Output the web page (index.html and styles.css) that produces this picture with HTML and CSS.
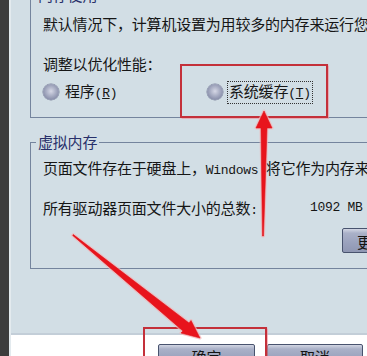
FILE: index.html
```
<!DOCTYPE html>
<html lang="zh-CN">
<head>
<meta charset="utf-8">
<title>性能选项</title>
<link rel="stylesheet" href="styles.css">
</head>
<body>
<div class="screen">
  <div class="strip"></div>
  <div class="window">
    <div class="panel">
      <fieldset class="group group-mem">
        <legend class="legend">内存使用</legend>
        <div class="gb-body mem-body">
          <div class="line">默认情况下，计算机设置为用较多的内存来运行您的程序。</div>
          <div class="line line-gap">调整以优化性能：</div>
          <div class="radios">
            <label class="radio-item first">
              <span class="radio"></span>
              <span class="radio-text">程序<span class="lat">(<u>R</u>)</span></span>
            </label>
            <label class="radio-item">
              <span class="radio"></span>
              <span class="radio-text focus">系统缓存<span class="lat">(<u>T</u>)</span></span>
            </label>
          </div>
        </div>
      </fieldset>
      <fieldset class="group group-vm">
        <legend class="legend">虚拟内存</legend>
        <div class="gb-body vm-body">
          <div class="line">页面文件存在于硬盘上，<span class="lat">Windows </span>将它作为内存来使用。</div>
          <div class="line line-gap total">
            <span class="total-label">所有驱动器页面文件大小的总数<span class="lat">:</span></span>
            <span class="lat">1092 MB</span>
          </div>
          <div class="btn-row">
            <button class="btn change">更改(<u>C</u>)...</button>
          </div>
        </div>
      </fieldset>
    </div>
    <div class="footer">
      <button class="btn ok">确定</button>
      <button class="btn cancel">取消</button>
    </div>
  </div>
  <div class="mark mark-cache"></div>
  <div class="mark mark-ok"></div>
  <svg class="arrows" width="367" height="356" viewBox="0 0 367 356">
    <g class="glow">
      <polygon points="262.5,236 263.5,236 267,128 272,128 264,111 256,128 261,128"/>
      <polygon points="72.7,235.4 73.3,234.6 189,323 191,320.5 200,338 181,333 183,331"/>
    </g>
    <g class="core">
      <polygon points="262.5,236 263.5,236 267,128 272,128 264,111 256,128 261,128"/>
      <polygon points="72.7,235.4 73.3,234.6 189,323 191,320.5 200,338 181,333 183,331"/>
    </g>
  </svg>
</div>
</body>
</html>
```
FILE: styles.css
```
* {
  box-sizing: border-box;
}

html, body {
  margin: 0;
  padding: 0;
  background: #ffffff;
}

body {
  font-family: "Noto Sans CJK SC", "Noto Sans", sans-serif;
  font-size: 15px;
  color: #161616;
}

.screen {
  position: relative;
  width: 367px;
  height: 356px;
  overflow: hidden;
  display: flex;
}

.strip {
  width: 9px;
  flex: none;
  background: #3c3c3c;
}

.window {
  flex: 1;
  min-width: 0;
  display: flex;
  flex-direction: column;
  border-left: 2px solid #e3eaee;
  background: #ffffff;
}

.panel {
  height: 335px;
  flex: none;
  overflow: hidden;
  background: #d2dee5;
  border-bottom: 2px solid #c3ced8;
  padding-left: 19px;
}

.group {
  margin: 0;
  padding: 0;
  min-width: 0;
  width: 390px;
  border: 1px solid #74849d;
}

.group-mem {
  margin-top: -13px;
}

.group-vm {
  margin-top: 16px;
}

.legend {
  margin-left: 5px;
  padding: 0 2px;
  line-height: 16px;
  color: #28306a;
  letter-spacing: -0.2px;
}

.gb-body {
  padding-left: 12px;
}

.mem-body {
  padding-top: 11px;
  padding-bottom: 15px;
}

.vm-body {
  padding-top: 8px;
  padding-bottom: 15px;
}

.line {
  height: 20px;
  line-height: 20px;
  white-space: nowrap;
  letter-spacing: -0.2px;
}

.line-gap {
  margin-top: 20px;
}

.lat {
  font-family: "Liberation Mono", monospace;
  font-size: 13px;
  letter-spacing: -0.3px;
}

.radios {
  margin-top: 8px;
  height: 20px;
  display: flex;
  align-items: center;
}

.radio-item {
  display: flex;
  align-items: center;
  gap: 4px;
  letter-spacing: -0.2px;
  white-space: nowrap;
}

.radio-item.first {
  width: 164px;
}

.radio {
  width: 16px;
  height: 16px;
  border-radius: 50%;
  background: radial-gradient(circle at 50% 45%, #d6d8e6 0, #a9aec4 40%, #858ba7 75%, #6f7593 100%);
  box-shadow: 0 0 0 0.5px #7c829c;
}

.radio-text {
  line-height: 18px;
  padding: 0 1px;
  border: 1px solid transparent;
}

.radio-text.focus {
  border: 1px dotted #333333;
}

.total {
  display: flex;
}

.total-label {
  width: 267px;
  flex: none;
}

.btn-row {
  margin-top: 10px;
  height: 25px;
}

.btn {
  font-family: "Noto Sans CJK SC", "Noto Sans", sans-serif;
  font-size: 15px;
  color: #141414;
  line-height: 20px;
  padding: 2px 0 0;
  border: 1px solid #48536e;
  border-radius: 2px;
  background: linear-gradient(#d2d6e3 0, #aab1c8 18%, #9aa2bd 60%, #8f97b3 100%);
  text-align: center;
}

.change {
  margin-left: 299px;
  height: 25px;
  width: 96px;
  padding-left: 14px;
  text-align: left;
  white-space: nowrap;
}

.footer {
  flex: 1;
  display: flex;
  justify-content: flex-end;
  gap: 12px;
  padding-top: 9px;
  padding-right: 4px;
}

.ok {
  width: 97px;
  height: 24px;
  flex: none;
}

.cancel {
  width: 96px;
  height: 24px;
  flex: none;
}

.mark {
  position: absolute;
  border: 2px solid #c4303a;
  box-shadow: 0 0 1px 0.5px rgba(240, 140, 150, 0.6);
}

.mark-cache {
  left: 180px;
  top: 64px;
  width: 148px;
  height: 54px;
}

.mark-ok {
  left: 143px;
  top: 327px;
  width: 124px;
  height: 40px;
}

.arrows {
  position: absolute;
  left: 0;
  top: 0;
  pointer-events: none;
}

.glow polygon {
  fill: #f2a0a4;
  stroke: #f4b6b8;
  stroke-width: 3;
  stroke-linejoin: round;
  opacity: 0.7;
}

.core polygon {
  fill: #e8141c;
  stroke: #e01018;
  stroke-width: 0.6;
  stroke-linejoin: round;
}
```
